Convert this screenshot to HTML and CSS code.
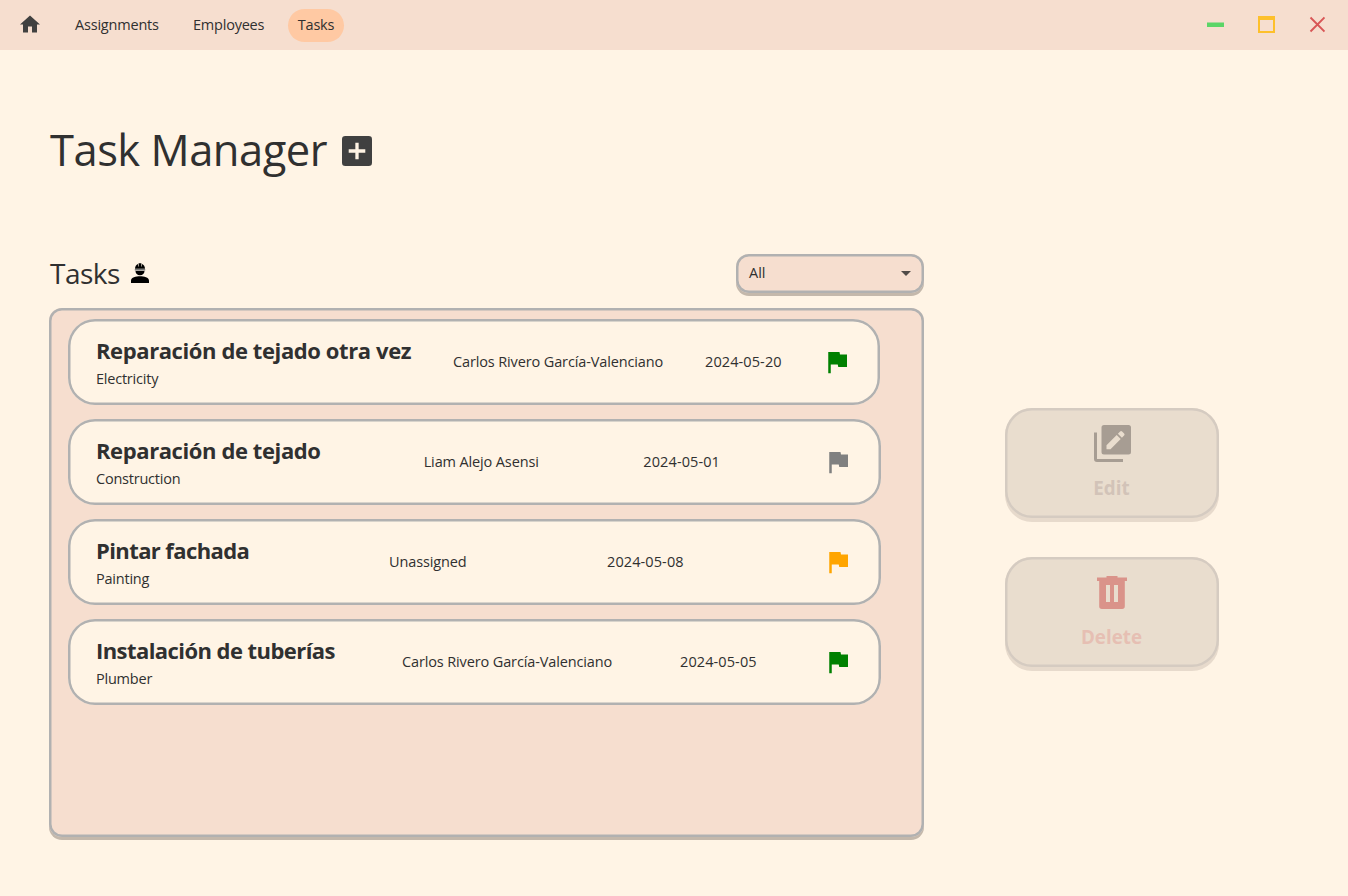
FILE: index.html
```
<!DOCTYPE html>
<html lang="en">
<head>
<meta charset="utf-8">
<title>Task Manager</title>
<link rel="stylesheet" href="styles.css">
</head>
<body>
<svg class="defs" aria-hidden="true">
  <symbol id="flag" viewBox="0 0 24 24"><path fill="currentColor" d="M14.4 6 14 4H5v17h2v-7h5.6l.4 2h7V6z"/></symbol>
</svg>
<header class="bar">
  <nav class="nav">
    <svg class="home" viewBox="0 0 24 24"><path fill="#404040" d="M10 20v-6h4v6h5v-8h3L12 3 2 12h3v8z"/></svg>
    <a class="link assignments">Assignments</a>
    <a class="link employees">Employees</a>
    <a class="link active">Tasks</a>
  </nav>
  <div class="controls">
    <svg width="17" height="18" viewBox="0 0 17 18"><path fill="#5bd567" d="M0 6.500h17v4.500H0z"/></svg>
    <svg width="17" height="18" viewBox="0 0 17 18"><path fill="#fdc02c" fill-rule="evenodd" d="M0 0h17v17H0zM2 4v11h13V4z"/></svg>
    <svg width="16" height="18" viewBox="0 0 16 18"><path stroke="#d85656" stroke-width="1.900" d="M1.500 1.500l14 14M15.500 1.500l-14 14"/></svg>
  </div>
</header>
<main class="page">
  <section class="left">
    <div class="heading">
      <h1>Task Manager</h1>
      <svg class="add" viewBox="0 0 30 30"><rect width="30" height="30" rx="3.300" fill="#404040"/><path stroke="#fff3e4" stroke-width="3.300" d="M6.700 15h16.600M15 6.700v16.600"/></svg>
    </div>
    <div class="subhead">
      <h2>Tasks</h2>
      <svg class="worker" viewBox="0 0 18 20"><path d="M0 20v-2.300C0 14.500 5 13.300 9 13.300s9 1.200 9 4.400V20zM4.500 8h9c0 2.500-1.800 4.300-4.500 4.300S4.500 10.500 4.500 8zM4 5.700C4 3.500 5.200 1.800 7 1v2.500h.6V.3h2.800v3.200h.6V1c1.800.8 3 2.500 3 4.700z"/><path fill="#777" d="M3.800 5.900h10.400v1.700H3.800z"/></svg>
      <div class="select"><span>All</span><i class="caret"></i></div>
    </div>
    <div class="panel">
      <article class="card first">
        <div class="task t1"><h3>Reparación de tejado otra vez</h3><p>Electricity</p></div>
        <span class="text carlos">Carlos Rivero García-Valenciano</span><span class="text date">2024-05-20</span>
        <svg class="flag green"><use href="#flag"/></svg>
      </article>
      <article class="card">
        <div class="task t2"><h3>Reparación de tejado</h3><p>Construction</p></div>
        <span class="text liam">Liam Alejo Asensi</span><span class="text date">2024-05-01</span>
        <svg class="flag gray"><use href="#flag"/></svg>
      </article>
      <article class="card">
        <div class="task t3"><h3>Pintar fachada</h3><p>Painting</p></div>
        <span class="text none">Unassigned</span><span class="text date">2024-05-08</span>
        <svg class="flag orange"><use href="#flag"/></svg>
      </article>
      <article class="card">
        <div class="task t4"><h3>Instalación de tuberías</h3><p>Plumber</p></div>
        <span class="text carlos">Carlos Rivero García-Valenciano</span><span class="text date">2024-05-05</span>
        <svg class="flag green"><use href="#flag"/></svg>
      </article>
    </div>
  </section>
  <aside class="actions">
    <button class="action edit" disabled>
      <svg viewBox="0 0 37 37"><path fill="#a79d93" fill-rule="evenodd" d="M10 0h24.500a2.500 2.500 0 0 1 2.500 2.500v24.500a2.500 2.500 0 0 1-2.500 2.500H10A2.500 2.500 0 0 1 7.500 27V2.500A2.500 2.500 0 0 1 10 0zM12.500 20.300v4h4L26.700 14l-4-4zM23.900 8.700l4 4 2.200-2.200a1.400 1.400 0 0 0 0-2l-2-2a1.400 1.400 0 0 0-2 0zM0 7.400h3V34h26v3H3a3 3 0 0 1-3-3z"/></svg>
      <span>Edit</span>
    </button>
    <button class="action delete" disabled>
      <svg viewBox="0 0 30 33"><path fill="#da938a" fill-rule="evenodd" d="M9.500 0h11v1.600H30v3.500h-2.200v25.200A2.700 2.700 0 0 1 25.100 33H4.900a2.700 2.700 0 0 1-2.700-2.700V5.100H0V1.600h9.500zM9 9v17h4V9zM17 9v17h4V9z"/></svg>
      <span>Delete</span>
    </button>
  </aside>
</main>
</body>
</html>
```
FILE: styles.css
```
* { box-sizing: border-box; }
body { margin: 0; height: 896px; overflow: hidden; background: #fff4e5; color: #303030; font: 14.5px/20px "Open Sans", "Noto Sans", sans-serif; }
h1, h2, h3, p { margin: 0; }
svg { display: block; flex: none; }
.defs { display: none; }
.bar { height: 50px; background: #f6decf; display: flex; justify-content: space-between; align-items: center; padding: 0 23px 0 19px; }
.nav { display: flex; align-items: center; }
.home { width: 24px; height: 25px; margin: 0 34.5px 1px -1.5px; }
.link { white-space: nowrap; margin-left: -1px; }
.assignments { width: 119px; letter-spacing: -.2px; }
.employees { width: 96px; letter-spacing: -.22px; }
.active { width: 56px; height: 33px; line-height: 32px; border-radius: 17px; background: #ffc9a3; text-align: center; letter-spacing: -.2px; margin-top: 1px; }
.controls { display: flex; gap: 34px; }
.page { display: flex; padding-left: 49px; }
.left { width: 875px; padding-top: 69px; }
.heading { height: 64px; display: flex; align-items: center; }
h1 { width: 293px; padding: 0 0 2px 1px; font-weight: 400; font-size: 43.5px; line-height: 60px; letter-spacing: -.5px; white-space: nowrap; }
.add { width: 30px; height: 30px; }
.subhead { height: 40px; margin-top: 71px; display: flex; align-items: flex-start; }
h2 { width: 82px; padding-left: 1px; font-weight: 400; font-size: 28px; line-height: 38px; letter-spacing: -.5px; white-space: nowrap; }
.worker { width: 18px; height: 20px; margin-top: 9px; }
.select { width: 188px; height: 39px; margin-left: auto; padding: 0 13px; display: flex; align-items: center; justify-content: space-between; border-radius: 13px; background: #f6decf; box-shadow: inset 0 0 0 2.500px #b1b1b1, 0 3px 0 #c4b8ab; }
.select span { padding-bottom: 2px; }
.caret { border: 5px solid transparent; border-top-color: #504b48; border-bottom: 0; }
.panel { height: 529px; margin-top: 14px; padding: 11px 43px 0 19px; border-radius: 13px; background: #f6decf; box-shadow: inset 0 0 0 2.500px #b1b1b1, 0 3px 0 #c4b8ab; display: flex; flex-direction: column; gap: 14px; }
.card { height: 86px; padding: 0 28px; display: flex; justify-content: space-between; align-items: center; border-radius: 27px; background: #fff4e5; box-shadow: inset 0 0 0 2.500px #b1b1b1; }
.first { margin-right: 1px; }
.task { height: 56px; }
.task h3 { font-size: 22px; line-height: 33px; font-weight: 700; white-space: nowrap; letter-spacing: -.4px; }
.task p { line-height: 24px; letter-spacing: -.22px; }
.t1 { width: 316px; }
.t2 { width: 224px; }
.t3 { width: 153px; }
.t3 h3 { letter-spacing: -.6px; }
.t4 { width: 239px; }
.t4 h3 { letter-spacing: -.56px; }
.text { white-space: nowrap; letter-spacing: -.13px; }
.carlos { width: 210px; }
.liam { width: 115px; }
.none { width: 77px; }
.date { width: 77px; padding-left: 1px; letter-spacing: .1px; }
.flag { width: 30px; height: 30px; }
.green { color: #008000; }
.gray { color: #808080; }
.orange { color: #ffa500; }
.actions { margin: 358px 0 0 81px; display: flex; flex-direction: column; gap: 39px; }
.action { width: 214px; height: 110px; padding: 0; border: 0; border-radius: 27px; background: #e9ddce; box-shadow: inset 0 0 0 2.500px #d5cbc1, 0 4px 0 #e7dacc; display: flex; flex-direction: column; align-items: center; font: 700 18.800px/26px "Open Sans", "Noto Sans", sans-serif; }
.action span { padding-right: 1px; }
.edit { color: #d2c3b8; }
.edit svg { width: 37px; height: 37px; margin: 17px 0 13px; }
.delete { color: #e6bfb3; }
.delete svg { width: 30px; height: 33px; margin: 19px 0 15px; }
```
